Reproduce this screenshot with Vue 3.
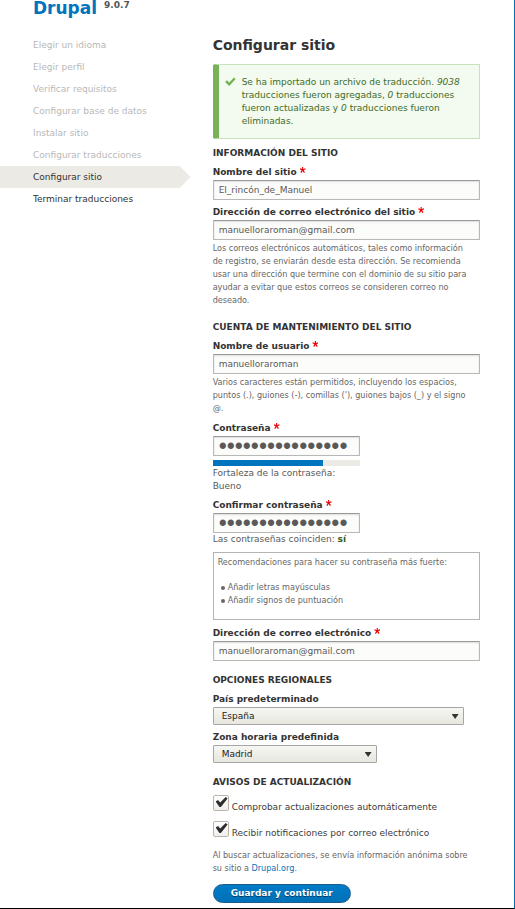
<script setup>
import { ref } from 'vue'

const steps = [
  { label: 'Elegir un idioma', state: 'done' },
  { label: 'Elegir perfil', state: 'done' },
  { label: 'Verificar requisitos', state: 'done' },
  { label: 'Configurar base de datos', state: 'done' },
  { label: 'Instalar sitio', state: 'done' },
  { label: 'Configurar traducciones', state: 'done' },
  { label: 'Configurar sitio', state: 'active' },
  { label: 'Terminar traducciones', state: 'next' },
]

const siteName = ref('El_rincón_de_Manuel')
const siteMail = ref('manuelloraroman@gmail.com')
const userName = ref('manuelloraroman')
const password = ref('contrasena-segur')
const confirmation = ref('contrasena-segur')
const userMail = ref('manuelloraroman@gmail.com')
const country = ref('España')
const timezone = ref('Madrid')
const autoCheck = ref(true)
const mailNotices = ref(true)
const strength = 75
</script>

<template>
  <div class="page">
    <aside class="sidebar">
      <div class="brand">Drupal <span class="version">9.0.7</span></div>
      <ol class="steps">
        <li v-for="step in steps" :key="step.label" :class="['step', step.state]">{{ step.label }}</li>
      </ol>
    </aside>

    <main class="content">
      <h1>Configurar sitio</h1>

      <div class="status" role="status">
        <svg class="status-icon" viewBox="0 0 11 9" aria-hidden="true">
          <path d="M1 4.2 L4.2 7.2 L9.8 1.2" fill="none" stroke="#73b355" stroke-width="2.4" />
        </svg>
        <p>
          Se ha importado un archivo de traducción. <em>9038</em> traducciones fueron agregadas,
          <em>0</em> traducciones fueron actualizadas y <em>0</em> traducciones fueron eliminadas.
        </p>
      </div>

      <form @submit.prevent>
        <section>
          <h2>Información del sitio</h2>
          <div class="field">
            <label class="required" for="site-name">Nombre del sitio</label>
            <input id="site-name" v-model="siteName" class="text" type="text" required />
          </div>
          <div class="field">
            <label class="required" for="site-mail">Dirección de correo electrónico del sitio</label>
            <input id="site-mail" v-model="siteMail" class="text" type="email" required />
            <p class="description">
              Los correos electrónicos automáticos, tales como información de registro, se enviarán
              desde esta dirección. Se recomienda usar una dirección que termine con el dominio de su
              sitio para ayudar a evitar que estos correos se consideren correo no deseado.
            </p>
          </div>
        </section>

        <section>
          <h2>Cuenta de mantenimiento del sitio</h2>
          <div class="field">
            <label class="required" for="user-name">Nombre de usuario</label>
            <input id="user-name" v-model="userName" class="text" type="text" required />
            <p class="description">
              Varios caracteres están permitidos, incluyendo los espacios, puntos (.), guiones (-),
              comillas ('), guiones bajos (_) y el signo @.
            </p>
          </div>
          <div class="field narrow">
            <label class="required" for="password">Contraseña</label>
            <input id="password" v-model="password" class="text secret" type="password" required />
            <div class="meter"><div class="meter-fill" :style="{ width: strength + '%' }"></div></div>
            <p class="result">Fortaleza de la contraseña: Bueno</p>
          </div>
          <div class="field narrow">
            <label class="required" for="confirmation">Confirmar contraseña</label>
            <input id="confirmation" v-model="confirmation" class="text secret" type="password" required />
            <p class="result">Las contraseñas coinciden: <strong>sí</strong></p>
          </div>
          <div class="tips">
            <p>Recomendaciones para hacer su contraseña más fuerte:</p>
            <ul>
              <li>Añadir letras mayúsculas</li>
              <li>Añadir signos de puntuación</li>
            </ul>
          </div>
          <div class="field">
            <label class="required" for="user-mail">Dirección de correo electrónico</label>
            <input id="user-mail" v-model="userMail" class="text" type="email" required />
          </div>
        </section>

        <section>
          <h2>Opciones regionales</h2>
          <div class="field">
            <label for="country">País predeterminado</label>
            <div class="select country">
              <select id="country" v-model="country"><option>España</option></select>
            </div>
          </div>
          <div class="field">
            <label for="timezone">Zona horaria predefinida</label>
            <div class="select timezone">
              <select id="timezone" v-model="timezone"><option>Madrid</option></select>
            </div>
          </div>
        </section>

        <section>
          <h2>Avisos de actualización</h2>
          <div class="check">
            <input id="auto-check" v-model="autoCheck" type="checkbox" />
            <label for="auto-check">Comprobar actualizaciones automáticamente</label>
          </div>
          <div class="check">
            <input id="mail-notices" v-model="mailNotices" type="checkbox" />
            <label for="mail-notices">Recibir notificaciones por correo electrónico</label>
          </div>
          <p class="description">
            Al buscar actualizaciones, se envía información anónima sobre su sitio a
            <a href="#">Drupal.org</a>.
          </p>
        </section>

        <button class="submit" type="submit">Guardar y continuar</button>
      </form>
    </main>
  </div>
</template>

<style>
body {
  background: #fff;
}
</style>

<style scoped>
.page {
  display: grid;
  grid-template-columns: 191fr 324fr;
  border-right: 1px solid #0071b3;
  border-bottom: 1px solid #000;
  font: 9px/13px "DejaVu Sans", sans-serif;
  color: #3b3b3b;
}
.page * {
  box-sizing: border-box;
}
p, h1, h2, ol, ul {
  margin: 0;
  padding: 0;
}
.brand {
  display: flex;
  align-items: flex-start;
  gap: 7px;
  height: 34px;
  padding-left: 33px;
  color: #0074bd;
  font-size: 17px;
  font-weight: bold;
  line-height: 16px;
}
.version {
  color: #555;
  font-size: 9px;
  line-height: 11px;
}
.steps {
  list-style: none;
}
.step {
  padding-left: 33px;
  line-height: 22px;
  color: #b8b8b8;
}
.step.active {
  background: #ebeae4;
  color: #333;
  clip-path: polygon(0 0, calc(100% - 11px) 0, 100% 50%, calc(100% - 11px) 100%, 0 100%);
}
.step.next {
  color: #333;
}
.content {
  padding: 35px 34px 5px 22px;
}
h1 {
  font-size: 14px;
  line-height: 20px;
  color: #333;
}
.status {
  display: flex;
  gap: 6px;
  margin-top: 9px;
  margin-bottom: 1px;
  padding: 11px 16px 10px 6px;
  border: 1px solid #c9e1bd;
  border-left: 6px solid #77b259;
  border-radius: 2px 0 0 2px;
  background: #f3faef;
  color: #3f6b29;
}
.status-icon {
  flex: none;
  width: 11px;
  height: 9px;
  margin-top: 1px;
}
section {
  padding-top: 7px;
  margin-bottom: 6px;
}
h2 {
  margin-bottom: 6px;
  font-size: 9px;
  line-height: 13px;
  text-transform: uppercase;
  color: #333;
}
.field {
  margin-bottom: 6px;
}
.field label {
  display: block;
  margin-bottom: 1px;
  font-weight: bold;
  color: #333;
}
.required::after {
  content: "";
  display: inline-block;
  width: 6px;
  height: 6px;
  margin-left: 3px;
  vertical-align: 2px;
  background: #ee0000;
  clip-path: polygon(40% 0, 60% 0, 58% 34%, 94% 22%, 100% 40%, 66% 52%, 88% 88%, 72% 98%, 50% 66%, 28% 98%, 12% 88%, 34% 52%, 0 40%, 6% 22%, 42% 34%);
}
.text {
  display: block;
  width: 100%;
  height: 20px;
  padding: 0 5px;
  border: 1px solid #b8b8b8;
  border-top-color: #999;
  border-radius: 1px;
  background: #fcfcfa;
  box-shadow: inset 0 1px 2px rgba(0, 0, 0, 0.125);
  color: #595959;
  font: inherit;
}
.description,
.tips {
  color: #666;
  font-family: "DejaVu Sans Condensed", "DejaVu Sans", sans-serif;
}
.description {
  padding: 2px 9px 1px 0;
}
.narrow {
  width: 147px;
}
.secret {
  font: 23px/18px "Liberation Sans", sans-serif;
}
.meter {
  height: 6px;
  margin: 4px 0 1px;
  background: #ebeae4;
}
.meter-fill {
  height: 100%;
  background: #0074bd;
}
.result {
  color: #595959;
}
.result strong {
  color: #325e1c;
}
.tips {
  min-height: 68px;
  margin-bottom: 7px;
  padding: 3px 4px;
  border: 1px solid #b4b4b4;
}
.tips ul {
  margin-top: 12px;
  padding-left: 10px;
  list-style: none;
}
.tips li::before {
  content: "";
  float: left;
  width: 4px;
  height: 4px;
  margin: 5px 0 0 -7px;
  border-radius: 50%;
  background: #666;
}
.select {
  position: relative;
  max-width: 100%;
}
.country {
  width: 251px;
}
.timezone {
  width: 164px;
}
.select::after {
  content: "";
  position: absolute;
  top: 7px;
  right: 5px;
  width: 7px;
  height: 5px;
  background: #333;
  clip-path: polygon(0 0, 100% 0, 50% 100%);
  pointer-events: none;
}
select {
  appearance: none;
  display: block;
  width: 100%;
  height: 18px;
  padding: 0 8px;
  border: 1px solid #a6a6a6;
  border-radius: 1px;
  background: linear-gradient(#f6f6f3, #e7e7df);
  color: #222;
  font: inherit;
}
.check {
  display: flex;
  align-items: flex-end;
  gap: 3px;
  height: 19px;
  margin-bottom: 7px;
}
.check input {
  appearance: none;
  align-self: flex-start;
  width: 16px;
  height: 16px;
  margin: 0;
  border: 1px solid #bcb3ab;
  border-radius: 2px;
  background: linear-gradient(#fff, #f0efed);
}
.check input:checked::before {
  content: "";
  display: block;
  width: 12px;
  height: 10px;
  margin: 1px 0 0 2px;
  background: #2e2e2e;
  clip-path: polygon(0 46%, 20% 30%, 38% 54%, 84% 0, 100% 14%, 44% 100%, 32% 100%);
}
a {
  color: #0074bd;
  text-decoration: none;
}
.submit {
  display: block;
  height: 19px;
  margin-top: 8px;
  padding: 0 17px;
  border: 1px solid #1e5c90;
  border-radius: 10px;
  background: linear-gradient(#007bc6, #0071b8);
  color: #fff;
  font: bold 9px/13px "DejaVu Sans", sans-serif;
  text-shadow: 0 1px rgba(0, 0, 0, 0.5);
}
</style>
